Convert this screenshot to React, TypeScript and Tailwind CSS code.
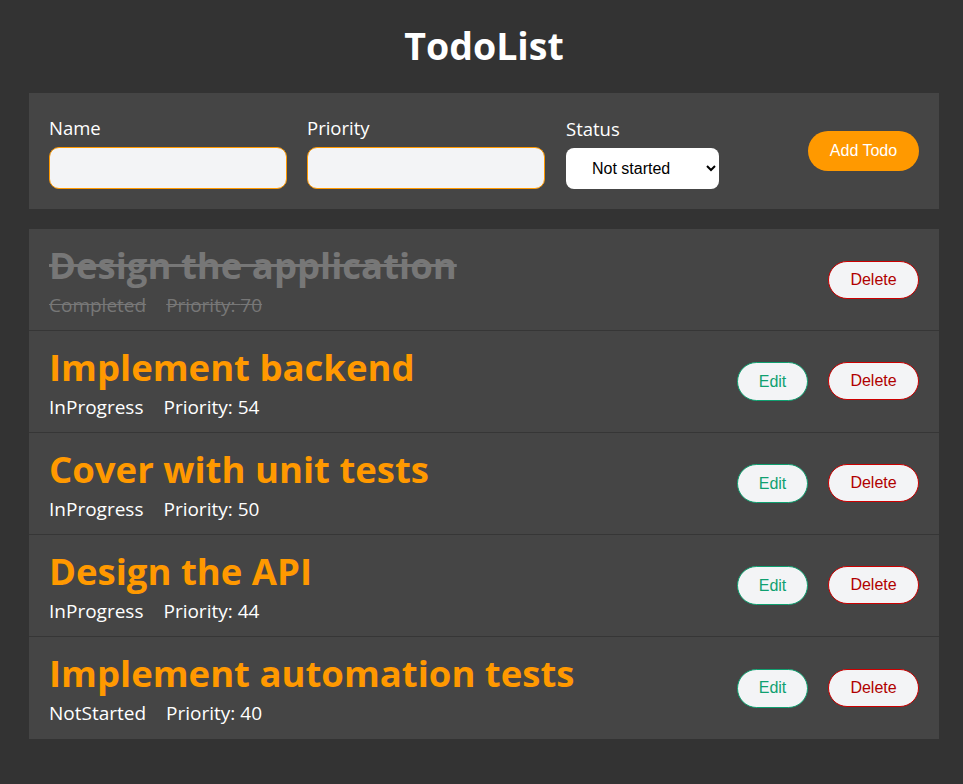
import React, { useState } from 'react';

type Todo = {
  id: number;
  name: string;
  status: 'Completed' | 'InProgress' | 'NotStarted';
  priority: number;
};

const initialTodos: Todo[] = [
  { id: 1, name: 'Design the application', status: 'Completed', priority: 70 },
  { id: 2, name: 'Implement backend', status: 'InProgress', priority: 54 },
  { id: 3, name: 'Cover with unit tests', status: 'InProgress', priority: 50 },
  { id: 4, name: 'Design the API', status: 'InProgress', priority: 44 },
  { id: 5, name: 'Implement automation tests', status: 'NotStarted', priority: 40 },
];

const TodoRow: React.FC<{ todo: Todo; onDelete: (id: number) => void }> = ({ todo, onDelete }) => {
  const done = todo.status === 'Completed';
  return (
    <li className="flex h-[102px] items-center border-b border-[#363636] px-5 last:h-[102px] last:border-b-0">
      <div className="flex-1 pt-[3px]">
        <div
          className={`text-[36.5px] font-bold leading-[38px] ${
            done ? 'text-[#777777] line-through' : 'text-[#ff9900]'
          }`}
        >
          {todo.name}
        </div>
        <div
          className={`mt-[9px] flex gap-5 text-[19px] leading-[24px] ${
            done ? 'text-[#777777] line-through' : 'text-white'
          }`}
        >
          <span>{todo.status}</span>
          <span>Priority: {todo.priority}</span>
        </div>
      </div>
      <div className="flex gap-5 font-['Liberation_Sans',Arial,sans-serif] text-[16px]">
        {!done && (
          <button className="h-[39px] w-[71px] rounded-full border border-[#0fa070] bg-[#f3f4f6] text-[#0fa070]">
            Edit
          </button>
        )}
        <button
          onClick={() => onDelete(todo.id)}
          className="h-[38px] w-[91px] rounded-full border border-[#cc0000] bg-[#f3f4f6] text-[#b00000]"
        >
          Delete
        </button>
      </div>
    </li>
  );
};

export default function App() {
  const [todos, setTodos] = useState<Todo[]>(initialTodos);
  const [name, setName] = useState('');
  const [priority, setPriority] = useState('');
  const [status, setStatus] = useState('NotStarted');

  const addTodo = () => {
    if (!name.trim()) return;
    setTodos([
      ...todos,
      { id: Date.now(), name, status: status as Todo['status'], priority: Number(priority) || 0 },
    ]);
    setName('');
    setPriority('');
  };

  return (
    <div className="min-h-[784px] bg-[#333333] font-['Open_Sans','Noto_Sans',sans-serif]">
      <div className="ml-[29px] w-[910px] pb-10">
        <h1 className="pt-[22px] pb-[24px] text-center text-[37.5px] font-bold leading-[47px] text-white">
          TodoList
        </h1>

        <div className="flex items-center gap-5 bg-[#454545] p-5">
          <div className="flex w-[238px] flex-col">
            <label className="mb-[6px] text-[18.5px] leading-[27px] text-white">Name</label>
            <input
              value={name}
              onChange={(e) => setName(e.target.value)}
              className="h-[42px] rounded-[10px] border border-[#ff9900] bg-[#f3f4f6] px-3 outline-none"
            />
          </div>
          <div className="flex w-[238px] flex-col">
            <label className="mb-[6px] text-[18.5px] leading-[27px] text-white">Priority</label>
            <input
              value={priority}
              onChange={(e) => setPriority(e.target.value)}
              className="h-[42px] rounded-[10px] border border-[#ff9900] bg-[#f3f4f6] px-3 outline-none"
            />
          </div>
          <div className="ml-[1px] flex w-[153px] flex-col pt-[2px]">
            <label className="mb-[6px] text-[18.5px] leading-[27px] text-white">Status</label>
            <select
              value={status}
              onChange={(e) => setStatus(e.target.value)}
              className="h-[41px] rounded-[8px] bg-white pl-[22px] pr-2 font-['Liberation_Sans',Arial,sans-serif] text-[16px] text-black"
            >
              <option value="NotStarted">Not started</option>
              <option value="InProgress">In progress</option>
              <option value="Completed">Completed</option>
            </select>
          </div>
          <button
            onClick={addTodo}
            className="ml-auto h-[40px] w-[111px] rounded-full bg-[#ff9900] font-['Liberation_Sans',Arial,sans-serif] text-[16px] text-white"
          >
            Add Todo
          </button>
        </div>

        <ul className="mt-5 bg-[#454545]">
          {todos.map((t) => (
            <TodoRow key={t.id} todo={t} onDelete={(id) => setTodos(todos.filter((x) => x.id !== id))} />
          ))}
        </ul>
      </div>
    </div>
  );
}
